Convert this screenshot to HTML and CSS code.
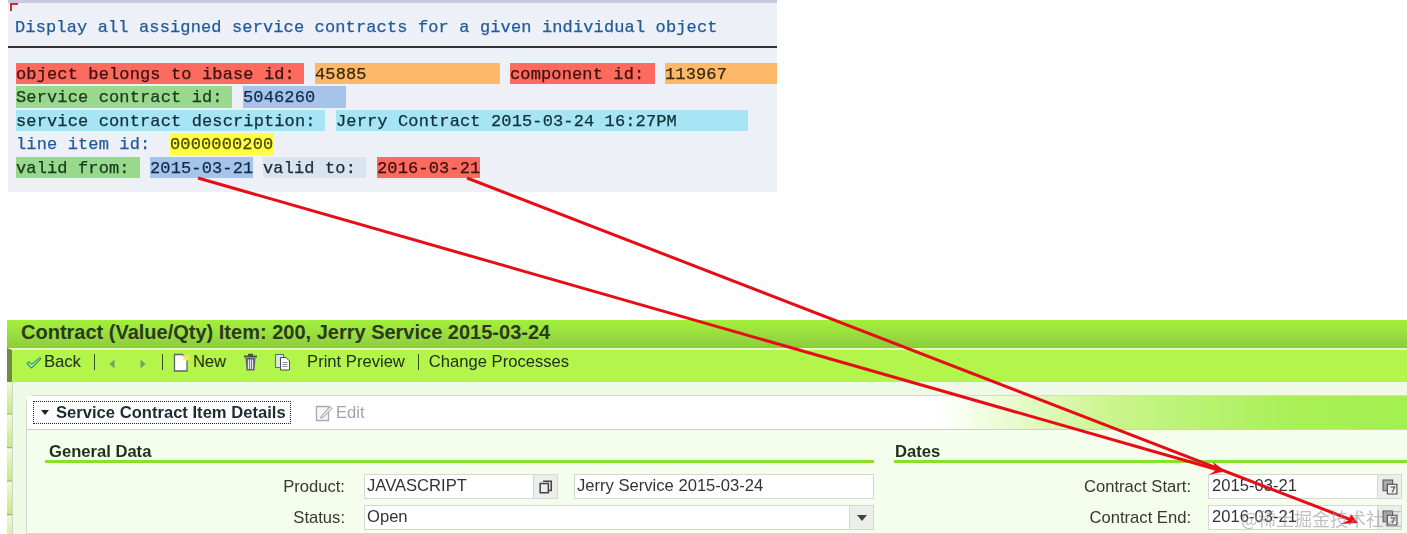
FILE: index.html
```html
<!DOCTYPE html>
<html lang="en">
<head>
<meta charset="utf-8">
<title>Contract</title>
<link rel="stylesheet" href="styles.css">
</head>
<body>
<div class="canvas">
  <section class="sap">
    <div class="sap-top"></div>
    <div class="corner"></div>
    <h1 class="sap-title">Display all assigned service contracts for a given individual object</h1>
    <div class="sap-rule"></div>
    <div class="sap-row">
      <span class="c red w288">object belongs to ibase id:</span>
      <span class="c orange w185 g11">45885</span>
      <span class="c red w145 g10">component id:</span>
      <span class="c orange w112 g10">113967</span>
    </div>
    <div class="sap-row">
      <span class="c green w216">Service contract id:</span>
      <span class="c blue w103 g11">5046260</span>
    </div>
    <div class="sap-row">
      <span class="c cyan w309">service contract description:</span>
      <span class="c cyan w412 g11">Jerry Contract 2015-03-24 16:27PM</span>
    </div>
    <div class="sap-row">
      <span class="c plain w154">line item id:</span>
      <span class="c yellow w103">0000000200</span>
    </div>
    <div class="sap-row">
      <span class="c green w124">valid from:</span>
      <span class="c blue w103 g10">2015-03-21</span>
      <span class="c pale w103 g10">valid to:</span>
      <span class="c red w103 g11">2016-03-21</span>
    </div>
  </section>

  <section class="crm">
    <h2 class="crm-title">Contract (Value/Qty) Item: 200, Jerry Service 2015-03-24</h2>
    <nav class="toolbar">
      <svg class="ico-check" viewBox="0 0 16 12"><path d="M1 6.500 5.500 11 15 1.500 13.500 .8 5.500 7.500 3 4.800z" fill="#c8f0d0" stroke="#2f9a5a" stroke-width="1.100" stroke-linejoin="round"/></svg>
      <span class="tb-text">Back</span>
      <span class="sep sep-1"></span>
      <svg class="ico-tri" viewBox="0 0 6 10"><path d="M5.500 0.500v9L0.500 5z" fill="#7f9a66"/></svg>
      <svg class="ico-tri tri-next" viewBox="0 0 6 10"><path d="M0.500 0.500v9L5.500 5z" fill="#7f9a66"/></svg>
      <span class="sep sep-2"></span>
      <svg class="ico-new" viewBox="0 0 18 19"><path d="M1.500 1.500h8l4.500 4.500v12h-12.500z" fill="#fff" stroke="#5a6470" stroke-width="1.300"/><path d="M13.500 0l1 2.500 3-.5-2 2.500 2 2.500-3-.5-1 2.500-1-2.500-3 .5 2-2.500-2-2.500 3 .5z" fill="#f4e860"/></svg>
      <span class="tb-text tb-new">New</span>
      <svg class="ico-trash" viewBox="0 0 15 18"><path d="M1 2.500h13v2H1zM5 .7h5v2H5z" fill="#4a5050"/><path d="M2.500 5h10l-1 12.500h-8z" fill="#5f6666"/><path d="M5.500 6.500v9.500M7.500 6.500v9.500M9.500 6.500v9.500" stroke="#e4e8e8" stroke-width="1.200"/></svg>
      <svg class="ico-copy" viewBox="0 0 17 18"><path d="M1.500 1.500h8v13h-8z" fill="#d9e6ee" stroke="#5a6a78"/><path d="M6.500 4.500h5.500l3.500 3.500v9h-9z" fill="#fff" stroke="#4a4f55"/><path d="M8.500 9.500h5M8.500 11.500h5M8.500 13.500h5" stroke="#8a9098"/></svg>
      <span class="tb-text tb-print">Print Preview</span>
      <span class="sep sep-3"></span>
      <span class="tb-text">Change Processes</span>
    </nav>
    <div class="crm-body">
      <div class="crm-side"></div>
      <div class="content">
        <div class="panel">
          <div class="panel-head">
            <div class="panel-toggle"><span class="caret"></span>Service Contract Item Details</div>
            <svg class="ico-edit" viewBox="0 0 18 18"><path d="M1.500 2.500h12v14h-12z" fill="#f6f6f6" stroke="#aaa" stroke-width="1.300"/><path d="M6.500 12l8.500-9.500 2 2-8.500 8.500-3 1z" fill="#eee" stroke="#999"/></svg>
            <span class="edit">Edit</span>
          </div>
          <div class="panel-body">
            <div class="col col-left">
              <h3 class="group">General Data</h3>
              <div class="form-row">
                <label class="lbl lbl-l">Product:</label>
                <div class="field f-product"><span class="val">JAVASCRIPT</span><span class="btn"><svg viewBox="0 0 12 12" class="btn-ico"><path d="M3.500 1h7v8h-2M1 3h7v8H1z" fill="none" stroke="#444" stroke-width="1.300"/></svg></span></div>
                <div class="field f-desc"><span class="val">Jerry Service 2015-03-24</span></div>
              </div>
              <div class="form-row">
                <label class="lbl lbl-l">Status:</label>
                <div class="field f-status"><span class="val">Open</span><span class="btn"><span class="dd"></span></span></div>
              </div>
            </div>
            <div class="col col-right">
              <h3 class="group group-r">Dates</h3>
              <div class="form-row">
                <label class="lbl lbl-r">Contract Start:</label>
                <div class="field f-date"><span class="val val-date">2015-03-21</span><span class="btn"><svg viewBox="0 0 15 15" class="cal"><path d="M1 1h9v10H1z" fill="#aaa" stroke="#555"/><path d="M5 5h9v9H5z" fill="#eee" stroke="#444"/><path d="M8 7.500h4L9.500 12.500" fill="none" stroke="#444"/></svg></span></div>
              </div>
              <div class="form-row">
                <label class="lbl lbl-r">Contract End:</label>
                <div class="field f-date"><span class="val val-date">2016-03-21</span><span class="btn"><svg viewBox="0 0 15 15" class="cal"><path d="M1 1h9v10H1z" fill="#aaa" stroke="#555"/><path d="M5 5h9v9H5z" fill="#eee" stroke="#444"/><path d="M8 7.500h4L9.500 12.500" fill="none" stroke="#444"/></svg></span></div>
              </div>
            </div>
          </div>
        </div>
      </div>
    </div>
  </section>

  <svg class="arrows" viewBox="0 0 1407 534">
    <g fill="none" stroke="#e80d14" stroke-width="3">
      <path d="M198 178 1222 471"/>
      <path d="M467 178 1354 521"/>
    </g>
    <path d="M1213 462 1225 471 1209 475 1216 470z" fill="#e80d14"/>
    <path d="M1351 514 1358 523 1341 524 1349 520z" fill="#e80d14"/>
  </svg>
  <div class="watermark">@稀土掘金技术社区</div>
</div>
</body>
</html>
```

FILE: styles.css
```css
* { box-sizing: border-box; }
html, body { margin: 0; padding: 0; background: #fff; }
.canvas { position: relative; width: 1407px; height: 534px; overflow: hidden; font-family: "Liberation Sans", Arial, sans-serif; }

/* SAP GUI list output */
.sap { margin-left: 8px; width: 769px; height: 192px; background: #eef0f8; font-family: "Liberation Mono", "Courier New", monospace; font-size: 17px; letter-spacing: .13px; -webkit-text-stroke: .25px currentColor; color: #2a2a2a; position: relative; filter: blur(.35px); }
.sap-top { height: 3px; background: #c9c8e0; }
.corner { position: absolute; left: 2px; top: 3px; width: 8px; height: 8px; border-top: 2px solid #c8302c; border-left: 2px solid #c8302c; }
.sap-title { margin: 0; padding: 14px 0 0 7px; height: 43px; font: inherit; color: #1f5a9a; line-height: 22px; }
.sap-rule { height: 2px; background: #333; }
.sap-row { display: flex; height: 21.5px; margin: 0 0 2px 8px; line-height: 24px; }
.sap-rule + .sap-row { margin-top: 14.7px; }
.c { display: block; flex: none; white-space: pre; height: 21.5px; }
.g10 { margin-left: 10px; }
.g11 { margin-left: 11px; }
.w288 { width: 288px; }
.w185 { width: 185px; }
.w145 { width: 145px; }
.w112 { width: 112px; }
.w216 { width: 216px; }
.w103 { width: 103px; }
.w309 { width: 309px; }
.w412 { width: 412px; }
.w154 { width: 154px; }
.w124 { width: 124px; }
.red { background: #fd6a5e; color: #3a1010; }
.orange { background: #fdb869; color: #3a2a10; }
.green { background: #98d98e; color: #173a1a; }
.blue { background: #a6c4ea; color: #102a4a; }
.cyan { background: #a7e5f4; color: #10303a; }
.yellow { background: #ffff44; color: #4a4a00; }
.pale { background: #d9e4ef; color: #1a2a3a; }
.plain { color: #1f5a9a; }

/* CRM web client */
.crm { position: absolute; left: 7px; top: 320px; width: 1400px; height: 214px; display: flex; flex-direction: column; background: #eef9e6; filter: blur(.35px); }
.crm-title { margin: 0; height: 28px; flex: none; padding-left: 14px; font-size: 20px; font-weight: bold; line-height: 25px; color: #2a3a1e; background: linear-gradient(180deg, #a2f03a 0, #9ee83c 25%, #94d640 70%, #8ccc38 100%); white-space: nowrap; }
.toolbar { height: 34px; flex: none; border-top: 2px solid #e6f8c4; border-left: 5px solid #6e8a44; background: #b4f54c; display: flex; align-items: center; font-size: 16.6px; color: #223018; padding: 0 0 8px 14px; }
.tb-text { white-space: nowrap; }
.ico-check { width: 16px; height: 12px; flex: none; margin-right: 2px; margin-top: 1px; }
.sep { width: 1px; height: 16px; background: #33501a; flex: none; }
.sep-1 { margin: 0 14px 0 13px; }
.sep-2 { margin: 0 10px 0 16px; }
.sep-3 { margin: 0 10px 0 13px; }
.ico-tri { width: 6px; height: 10px; flex: none; margin-top: 3px; }
.tri-next { margin-left: 25px; }
.ico-new { width: 18px; height: 19px; flex: none; }
.tb-new { margin-left: 2px; }
.ico-trash { width: 15px; height: 18px; margin-left: 17px; flex: none; }
.ico-copy { width: 17px; height: 18px; margin-left: 16px; flex: none; }
.tb-print { margin-left: 16px; }
.crm-body { flex: 1; display: flex; min-height: 0; }
.crm-side { width: 5px; flex: none; background: repeating-linear-gradient(180deg, #eef8d8 0, #c4ea80 31px, #9ab868 32px, #f4fbe8 33.5px); }
.content { flex: 1; min-width: 0; padding: 13px 0 0 13px; border-left: 1px solid #cfd8c8; }
.panel { background: #f5fdec; border: 1px solid #d4dacc; border-right: 0; border-radius: 8px 0 0 0; height: 100%; }
.panel-head { height: 34px; display: flex; align-items: center; padding-left: 6px; border-bottom: 1px solid #ccd2c4; background: linear-gradient(90deg, #fff 0, #fff 66%, #c8f58a 79%, #a8f056 92%, #a2f050 100%); }
.panel-toggle { display: flex; align-items: center; height: 23px; width: 258px; flex: none; border: 1px dotted #222; font-size: 16.6px; font-weight: bold; color: #1c2c30; padding-left: 7px; white-space: nowrap; }
.caret { width: 0; height: 0; border: 4.5px solid transparent; border-top: 5px solid #222; border-bottom: 0; margin-right: 7px; }
.ico-edit { width: 18px; height: 18px; margin-left: 24px; flex: none; }
.edit { color: #a4a4a4; font-size: 16.6px; margin-left: 3px; }
.panel-body { display: flex; padding-left: 18px; }
.col { flex: none; }
.col-left { width: 829px; }
.col-right { width: 514px; margin-left: 20px; }
.group { margin: 11px 0 0; height: 22px; padding-left: 4px; font-size: 16.6px; font-weight: bold; line-height: 22px; color: #1f2f20; border-bottom: 3px solid #86e02c; }
.group-r { padding-left: 1px; }
.form-row { display: flex; height: 31px; align-items: flex-start; font-size: 16.6px; color: #333; }
.group + .form-row { margin-top: 11px; }
.lbl { text-align: right; flex: none; line-height: 25px; color: #333a33; }
.lbl-l { width: 300px; }
.lbl-r { width: 297px; }
.field { display: flex; height: 25px; flex: none; background: #fff; border: 1px solid #d6d6d6; line-height: 22px; }
.val { flex: 1; padding-left: 2px; white-space: nowrap; }
.val-date { padding-left: 3px; }
.f-product { width: 194px; margin-left: 19px; }
.f-desc { width: 300px; margin-left: 16px; }
.f-status { width: 510px; margin-left: 19px; }
.f-date { width: 194px; margin-left: 17px; }
.btn { width: 24px; flex: none; display: flex; align-items: center; justify-content: center; background: #eceeea; border-left: 1px solid #d6d6d6; }
.btn-ico { width: 14px; height: 14px; }
.cal { width: 16px; height: 16px; }
.dd { width: 0; height: 0; border: 5px solid transparent; border-top: 6px solid #444; border-bottom: 0; }

/* Annotation overlay */
.arrows { position: absolute; left: 0; top: 0; width: 1407px; height: 534px; pointer-events: none; }
.watermark { position: absolute; left: 1241px; top: 507px; font-family: "Noto Sans CJK SC", sans-serif; font-size: 18px; color: rgba(150,150,150,.6); white-space: nowrap; line-height: 22px; }
```
